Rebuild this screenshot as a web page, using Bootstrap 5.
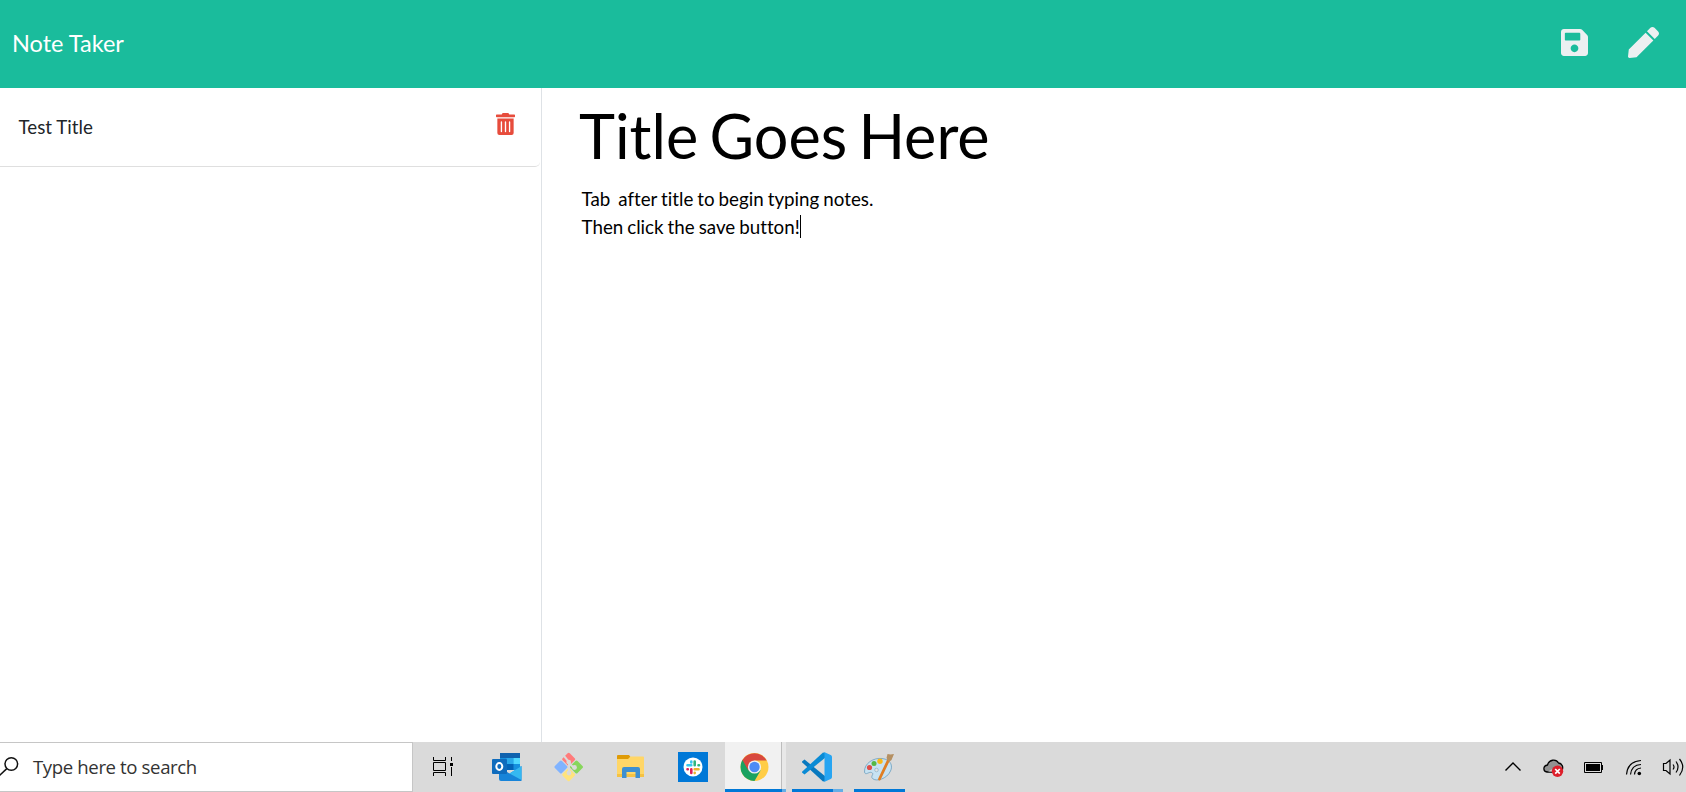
<!DOCTYPE html>
<html lang="en">
<head>
<meta charset="utf-8">
<meta name="viewport" content="width=device-width, initial-scale=1">
<title>Note Taker</title>
<link href="https://cdn.jsdelivr.net/npm/bootstrap@5.3.0/dist/css/bootstrap.min.css" rel="stylesheet">
<style>
body{font-family:Lato,"Liberation Sans",sans-serif;font-size:18.75px;line-height:28px;color:#212529;background:#fff;font-variant-ligatures:none}
.top-nav{height:88px;background:#1abc9c;padding:0 27px 3px 12px}
.top-nav .navbar-brand{color:#fff;font-size:23.5px;margin:0;padding:0}
.top-nav svg{fill:#ecf0f1}
.nav-icons{padding-bottom:1px}
.notes-side{width:542px;border-right:1px solid #dee2e6}
.note-row{height:79px;margin-right:1px;padding:0 25px 0 18.5px;border:0;border-bottom:1px solid #dfdfdf!important;border-bottom-right-radius:5px!important;color:#212529}
.note-row svg{margin-bottom:6px}
.note-head{font-size:61.1px;line-height:72px;word-spacing:-4.3px;color:#000;padding-top:12px}
.note-text{color:#000;white-space:pre;word-spacing:-.8px;padding:13px 0 0 2.5px}
.caret{display:inline-block;width:1px;height:23px;background:#000;vertical-align:-4px}
.task-bar{height:50px;background:#dadada}
.search-box{width:413px;height:50px;background:#fff;border:1px solid #c6c6c6;border-left:0;font-family:"Open Sans","Noto Sans",sans-serif;font-size:18.6px;letter-spacing:-.38px;color:#333}
.search-box span{margin-left:14px;white-space:nowrap}
.task-bar svg{overflow:visible;flex:none;display:block}
</style>
</head>
<body class="vh-100 d-flex flex-column overflow-hidden">
<nav class="navbar top-nav flex-nowrap justify-content-between flex-shrink-0">
  <a class="navbar-brand" href="#">Note Taker</a>
  <div class="nav-icons d-flex align-items-center">
    <svg width="27" height="31" viewBox="0 0 448 512" style="margin-right:40px"><path d="M433.941 129.941l-83.882-83.882A48 48 0 0 0 316.118 32H48C21.49 32 0 53.49 0 80v352c0 26.51 21.49 48 48 48h352c26.51 0 48-21.49 48-48V163.882a48 48 0 0 0-14.059-33.941zM224 416c-35.346 0-64-28.654-64-64 0-35.346 28.654-64 64-64s64 28.654 64 64c0 35.346-28.654 64-64 64zm96-304.52V212c0 6.627-5.373 12-12 12H76c-6.627 0-12-5.373-12-12V108c0-6.627 5.373-12 12-12h228.52c3.183 0 6.235 1.264 8.485 3.515l3.48 3.48A11.996 11.996 0 0 1 320 111.48z"/></svg>
    <svg width="31" height="31" viewBox="0 0 512 512"><path d="M290.74 93.24l128.02 128.02-277.99 277.99-114.14 12.6C11.35 513.54-1.56 500.62.14 485.34l12.7-114.22 277.9-277.88zm207.2-19.06l-60.11-60.11c-18.75-18.75-49.16-18.75-67.91 0l-56.55 56.55 128.02 128.02 56.55-56.55c18.75-18.76 18.75-49.16 0-67.91z"/></svg>
  </div>
</nav>
<main class="d-flex flex-grow-1">
  <aside class="notes-side flex-shrink-0">
    <ul class="list-group list-group-flush">
      <li class="list-group-item note-row d-flex align-items-center justify-content-between">
        <span>Test Title</span>
        <svg width="19" height="22" viewBox="0 0 448 512" preserveAspectRatio="none" fill="#e74c3c"><path d="M32 464a48 48 0 0 0 48 48h288a48 48 0 0 0 48-48V128H32zm272-256a16 16 0 0 1 32 0v224a16 16 0 0 1-32 0zm-96 0a16 16 0 0 1 32 0v224a16 16 0 0 1-32 0zm-96 0a16 16 0 0 1 32 0v224a16 16 0 0 1-32 0zM432 32H312l-9.4-18.7A24 24 0 0 0 281.1 0H166.8a23.72 23.72 0 0 0-21.4 13.3L136 32H16A16 16 0 0 0 0 48v32a16 16 0 0 0 16 16h416a16 16 0 0 0 16-16V48a16 16 0 0 0-16-16z"/></svg>
      </li>
    </ul>
  </aside>
  <section style="padding-left:37px">
    <div class="note-head">Title Goes Here</div>
    <div class="note-text">Tab  after title to begin typing notes.
Then click the save button!<i class="caret"></i></div>
  </section>
</main>
<footer class="task-bar d-flex flex-shrink-0">
  <div class="search-box d-flex align-items-center flex-shrink-0">
    <svg width="19" height="20" viewBox="0 757 19 20" fill="none" stroke="#111" stroke-width="1.5"><circle cx="11.3" cy="764" r="6.3"/><path d="M6.8 768.6L-1 776"/></svg>
    <span>Type here to search</span>
  </div>
  <!-- Task view -->
  <svg width="62" height="50" viewBox="413 742 62 50" fill="none" stroke="#000"><path d="M433.5 757v3.500h12V757M433.500 762.500h12v8h-12zM433.500 776v-3.500h12v3.500M451.500 757v4M451.500 767v9"/><path d="M450 763h3v3h-3z" fill="#000" stroke="none"/></svg>
  <!-- Outlook -->
  <svg width="62" height="50" viewBox="475 742 62 50"><path d="M500 753h20v5h-20z" fill="#0f62ae"/><path d="M500 758h20v12h-20z" fill="#1490df"/><path d="M506.500 758h7v6h-7z" fill="#28a8ea"/><path d="M513.500 758h6.500v6h-6.500z" fill="#50d9ff"/><path d="M506.500 764h7v6h-7z" fill="#0364b8"/><path d="M499 767l10.500 6.500L521.500 766v15H501q-2 0-2-2z" fill="#1784d9"/><path d="M509.500 773.500L521.500 766v14z" fill="#35b8f1"/><rect x="492" y="759" width="15" height="15" rx="1" fill="#0f6cbd"/><ellipse cx="499.300" cy="766.500" rx="3" ry="3.400" fill="none" stroke="#fff" stroke-width="2"/></svg>
  <!-- Git -->
  <svg width="62" height="50" viewBox="537 742 62 50"><g transform="translate(568.700 767) rotate(45)"><rect x="-10.500" y="-10.500" width="10" height="10" rx="1.500" fill="#ff7b7b"/><rect x="-10.500" y=".5" width="10" height="10" rx="1.500" fill="#80b3ff"/><rect x=".5" y="-10.500" width="10" height="10" rx="1.500" fill="#87d65c"/><rect x=".5" y=".5" width="10" height="10" rx="1.500" fill="#ffe37d"/></g><path d="M564 756l5 6v11M569 763l5 5" stroke="#dadada" stroke-width="2" fill="none"/><g fill="#dadada"><circle cx="568.700" cy="762" r="2.300"/><circle cx="569" cy="773" r="2.400"/><circle cx="574.500" cy="767.500" r="2.400"/></g></svg>
  <!-- File Explorer -->
  <svg width="62" height="50" viewBox="599 742 62 50"><path d="M617 756q0-1 1-1h11l1.500 2-2 3H617z" fill="#df9b06"/><path d="M617 759h11l2.500-2.500H643q1 0 1 1V777h-27z" fill="#ffd667"/><path d="M617 774h27v3h-27z" fill="#f5c243"/><path d="M622 778v-9q0-2 2-2h14q2 0 2 2v9h-4.500v-6h-9v6z" fill="#3d8fd1"/></svg>
  <!-- Slack -->
  <svg width="62" height="50" viewBox="661 742 62 50"><path d="M678 752h30v30h-30z" fill="#0078d7"/><circle cx="693" cy="767" r="9.500" fill="#fff"/><g stroke-width="2.600" stroke-linecap="round"><path d="M691.300 761.500v1M687.500 765.300h3.800" stroke="#36c5f0"/><path d="M694.700 761.500v3.800M698.500 765.300h.5" stroke="#2eb67d"/><path d="M694.700 769.200h3.800M694.700 772.800v.3" stroke="#ecb22e"/><path d="M691.300 769.200v3.800M687.500 769.200h.3" stroke="#e01e5a"/></g></svg>
  <!-- Chrome -->
  <svg width="62" height="50" viewBox="723 742 62 50"><path d="M725 742h56v47h-56z" fill="#f1f1f1"/><path d="M781 742h1v47h-1z" fill="#bdbdbd"/><path d="M782 742h4v47h-4z" fill="#e8e8e8"/><path d="M725 789h57v3h-57z" fill="#0078d7"/><path d="M782 789h4v3h-4z" fill="#65aee6"/><circle cx="754.500" cy="767" r="14" fill="#ffcd46"/><path d="M754.500 767L742.400 760A14 14 0 0 0 754.500 781L760.600 770.500z" fill="#1aa260"/><path d="M742.400 760A14 14 0 0 1 766.600 760.500H754.500L748.400 770.500z" fill="#d8483e"/><circle cx="754.500" cy="767" r="6.600" fill="#f1f1f1"/><circle cx="754.500" cy="767" r="5.200" fill="#4c8bf5"/></svg>
  <!-- Visual Studio Code -->
  <svg width="62" height="50" viewBox="785 742 62 50"><path d="M792 789h41v3h-41z" fill="#0078d7"/><path d="M833 789h10v3h-10z" fill="#65aee6"/><path d="M804.500 759.500L825.500 776.500V781L823 781.500L802.300 762.500q-.6-.7 0-1.300z" fill="#0879bf"/><path d="M804.500 774.500L825.500 757.500V753L823 752.500L802.300 771.500q-.6.700 0 1.300z" fill="#0a8bd5"/><path d="M824 752l6.700 3q1.300.7 1.300 2v20q0 1.300-1.300 2L824 782q0-.5.500-2v-26z" fill="#27a5f2"/></svg>
  <!-- Paint -->
  <svg width="62" height="50" viewBox="847 742 62 50"><path d="M854 789h51v3h-51z" fill="#0078d7"/><path d="M864.500 772C864 763 874 757.500 882 758.500C891 759.500 893 766 890.500 771C887 779 876 782 872.500 778.500C870 776 875 774 871.500 772.500C868.500 771.500 865.500 776 864.500 772z" fill="#c7e2f2" stroke="#7fabc6"/><circle cx="876.500" cy="770" r="1.800" fill="#e4e4e4" stroke="#8fb2c6" stroke-width=".7"/><circle cx="869.500" cy="767.500" r="2.600" fill="#df4e49"/><circle cx="874" cy="763.500" r="2.500" fill="#56b845"/><circle cx="880" cy="761.300" r="2.700" fill="#f9b916"/><path d="M889 759L879.500 779" stroke="#df7e24" stroke-width="2.800" stroke-linecap="round"/><path d="M886.500 758l1-4 3 .5 3.500-.5-2.500 6-2.500 2z" fill="#b59062"/></svg>
  <!-- System tray -->
  <svg class="ms-auto" width="186" height="50" viewBox="1500 742 186 50" fill="none" stroke="#000">
    <path d="M1505.500 770.500l7.500-7.500 7.500 7.500" stroke-width="1.400"/>
    <path d="M1547 772c-4-.5-4.500-6 .5-7c1.500-5.500 8.500-6.500 11-2c4 .5 5 4.500 3.500 7.500L1558 772z" fill="#929292" stroke-width="1.300"/>
    <path d="M1548 771.500l9-5 4.500 1.500-4 4z" fill="#d0d0d0" stroke="none"/>
    <circle cx="1557.500" cy="771.300" r="5.700" fill="#dd1f2b" stroke="none"/><path d="M1555.200 769l4.600 4.600M1559.800 769l-4.600 4.600" stroke="#fff" stroke-width="1.700"/>
    <path d="M1584.500 762.500h17v10h-17z"/><path d="M1586 764h14v7h-14zM1602 765h1v5h-1z" fill="#000" stroke="none"/>
    <path d="M1626.500 774.500q1-13 14.500-14M1630.500 774.500q1-9.500 10.500-10M1634.500 774.500q.5-6 6.500-6.500" stroke-width="1.200"/><circle cx="1639.300" cy="773.500" r="1.800" fill="#000" stroke="none"/>
    <path d="M1663.500 763.500h2.500l4-3.500v14l-4-3.500h-2.500zM1673 764.500q2 2.500 0 5M1676 761.500q4 5.500 0 11M1679.500 759q6.500 8 0 16.500" stroke-width="1.200"/>
  </svg>
</footer>
<script src="https://cdn.jsdelivr.net/npm/bootstrap@5.3.0/dist/js/bootstrap.bundle.min.js"></script>
</body>
</html>
